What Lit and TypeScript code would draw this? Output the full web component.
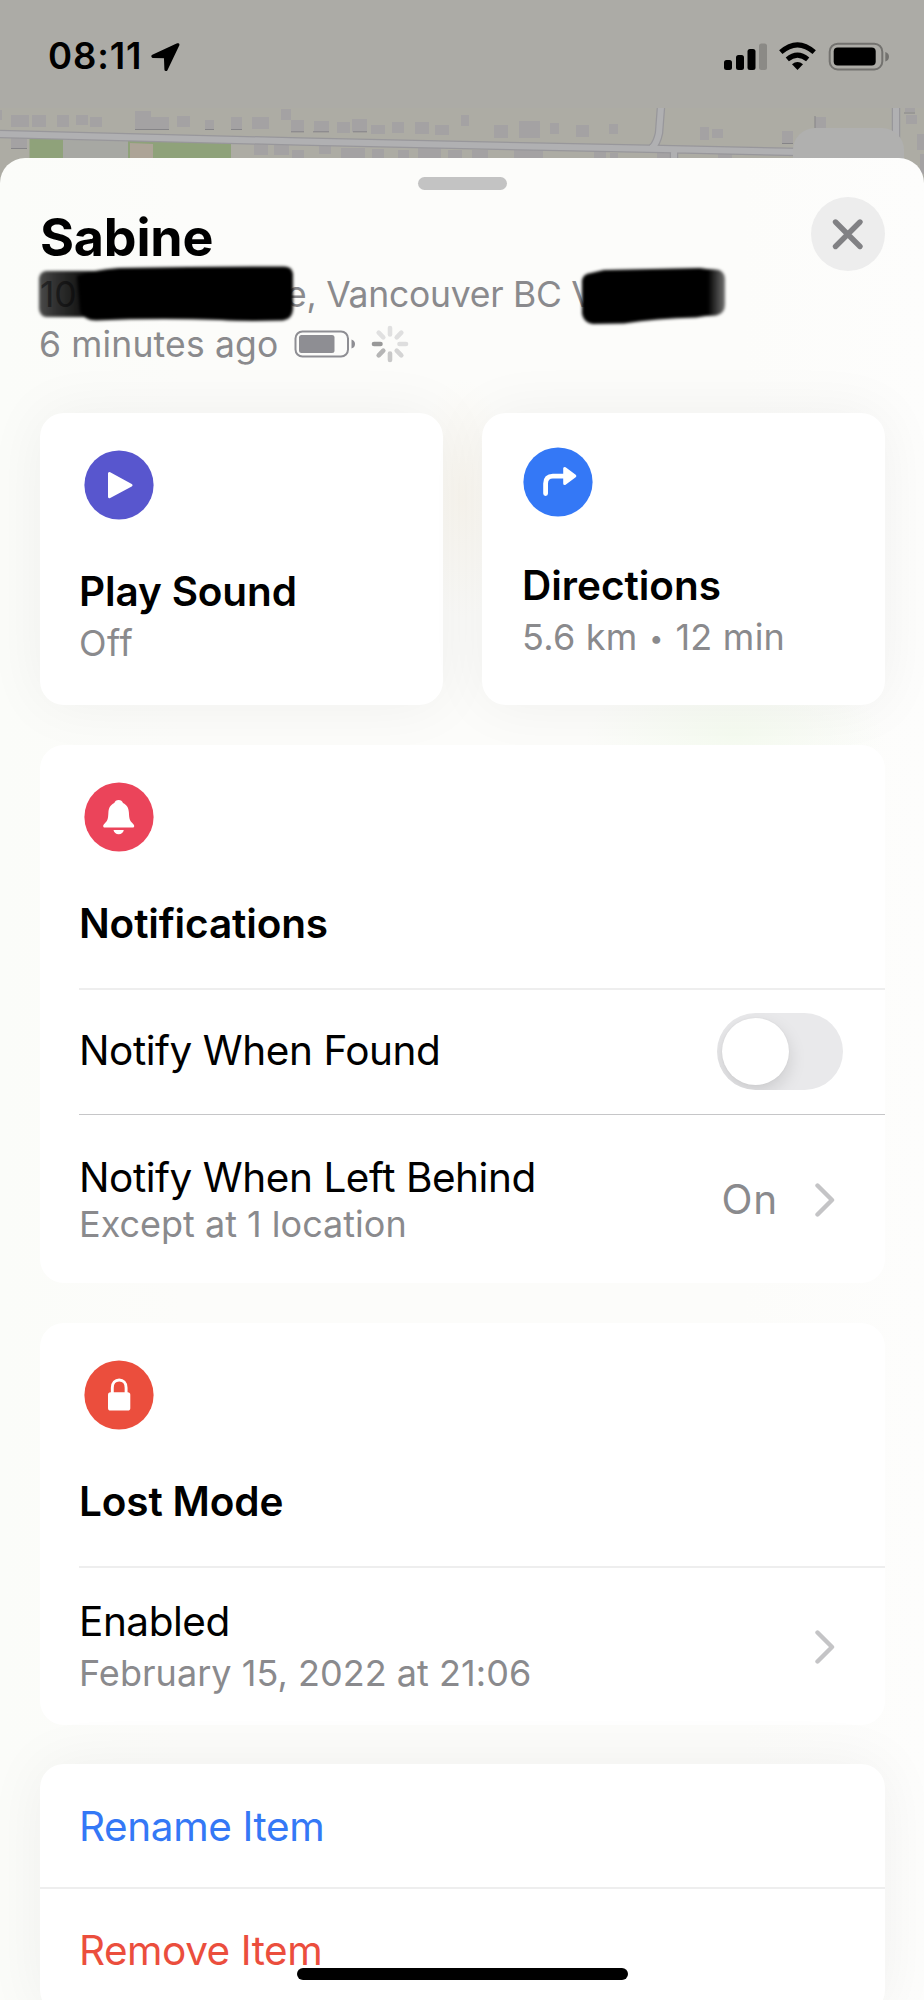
import { LitElement, html, css, svg } from "lit";
import { customElement, state } from "lit/decorators.js";

// x, y, width, height of the building footprints on the map strip
const buildings: number[][] = [
  [0, 110, 2, 10], [11, 115, 18, 12], [32, 115, 14, 12], [57, 115, 12, 12], [76, 115, 12, 10], [90, 117, 12, 10],
  [135, 111, 16, 18], [150, 117, 19, 12], [177, 116, 13, 11], [205, 120, 9, 10], [231, 117, 11, 13], [252, 117, 17, 12],
  [281, 109, 10, 11], [291, 120, 13, 12], [314, 121, 15, 11], [337, 122, 13, 11], [352, 119, 15, 13], [371, 125, 14, 9],
  [392, 122, 12, 11], [415, 122, 14, 12], [435, 125, 14, 10], [461, 115, 8, 11], [494, 125, 14, 13], [519, 121, 21, 17],
  [550, 123, 9, 11], [576, 125, 13, 12], [609, 124, 9, 10], [700, 127, 9, 13], [712, 129, 11, 9], [782, 131, 11, 12],
  [815, 117, 11, 11], [906, 115, 11, 9], [917, 134, 7, 16], [905, 107, 10, 5],
  [11, 138, 16, 10], [254, 144, 14, 11], [274, 145, 15, 10], [292, 150, 12, 8], [319, 145, 12, 9], [341, 148, 24, 10],
  [372, 149, 12, 9], [398, 150, 11, 8], [418, 147, 23, 11], [448, 150, 14, 8], [472, 150, 16, 8], [514, 149, 29, 9],
  [594, 151, 12, 7], [610, 153, 8, 5], [657, 152, 14, 6], [718, 154, 14, 4], [920, 154, 4, 20],
];

const disc = (color: string, glyph: unknown) => html`
  <svg class="disc" viewBox="0 0 70 70"><circle cx="35" cy="35" r="34.6" fill=${color} />${glyph}</svg>`;

const playGlyph = svg`<path d="M25.5 23.5v23.3L47 35.2z" fill="#fff" stroke="#fff" stroke-width="3" stroke-linejoin="round"/>`;
const turnGlyph = svg`<path d="M22.6 46.5V36.5q0-7.3 7.3-7.3H41" fill="none" stroke="#fff" stroke-width="4.8" stroke-linecap="round"/>
  <path d="M41.7 21.5v15L51.8 29z" fill="#fff" stroke="#fff" stroke-width="3" stroke-linejoin="round"/>`;
const bellGlyph = svg`<path d="M34.6 18c2.3 0 3.7 1.3 4.4 3 4 1.8 5.7 5.2 5.9 9.5.3 6.8 1 8.3 3.6 10.7 1.5 1.4 1.7 2 1.7 2.9 0 1-.6 1.5-1.7 1.5H20.9c-1.1 0-1.7-.5-1.7-1.5 0-.9.2-1.5 1.7-2.9 2.6-2.4 3.2-3.9 3.5-10.7.2-4.300 1.900-7.700 5.900-9.500.7-1.700 2-3 4.300-3zM29.500 48h10.300c-.4 2.600-2.400 4.200-5.100 4.200s-4.800-1.600-5.200-4.200z" fill="#fff"/>`;
const lockGlyph = svg`<rect x="24" y="32.300" width="22.300" height="18.300" rx="2.600" fill="#fff"/>
  <path d="M28.300 34v-6.300c0-4.800 2.900-7.700 6.900-7.700s6.900 2.900 6.900 7.700V34" fill="none" stroke="#fff" stroke-width="2.900"/>`;

const chevron = html`<svg class="chevron" width="20" height="34" viewBox="0 0 20 34"><path d="M2.500 2.500L17 17 2.500 31.500" fill="none" stroke="#c4c4c6" stroke-width="4.400" stroke-linecap="round" stroke-linejoin="round"/></svg>`;

@customElement("app-root")
export class AppRoot extends LitElement {
  @state() notifyFound = false;

  static styles = css`
    :host { display: block; width: 924px; height: 2000px; position: relative; overflow: hidden; background: #acaba6;
      font-family: Inter, "Liberation Sans", sans-serif; color: #000; }
    svg { display: block; flex: none; }
    .map { position: absolute; left: 0; top: 0; }
    .status { position: relative; height: 158px; box-sizing: border-box; padding: 34px 34px 0 48px; display: flex; align-items: flex-start; justify-content: space-between; }
    .clock { display: flex; align-items: flex-start; gap: 9px; }
    .time { font-size: 36.5px; line-height: 45px; font-weight: 600; letter-spacing: 0.87px; }
    .arrow { margin-top: 9px; }
    .signals { margin-top: 8px; }
    .sheet { position: relative; height: 1842px; box-sizing: border-box; padding: 0 39px 0 40px; border-radius: 25px 25px 0 0; display: flex; flex-direction: column;
      background: radial-gradient(ellipse 150px 60px at 735px 577px, #f5fbf0, transparent), radial-gradient(ellipse 50px 120px at 462px 340px, #faf7f0, transparent), linear-gradient(90deg, #fbfcf9, #fcfcfa 20%, #fcfcfa 80%, #fdfdfc); }
    .grabber { width: 89px; height: 13px; border-radius: 7px; background: #c3c3c3; margin: 19px auto 0; flex: none; }
    .head { display: flex; justify-content: space-between; height: 223px; flex: none; }
    .ident { padding-top: 18px; }
    .name { font-size: 52px; line-height: 60px; font-weight: 700; letter-spacing: -0.2px; }
    .line { position: relative; display: flex; align-items: center; font-size: 35.5px; line-height: 50px; color: #8a8a8d; white-space: pre; }
    .addr { margin-top: 2px; letter-spacing: -0.26px; }
    .num { width: 246px; }
    .redact { position: absolute; left: -6px; top: -10px; }
    .ago { letter-spacing: .16px; margin-left: -1px; }
    .batt { margin: 0 0 2px 16px; }
    .spin { margin: 0 0 2px 15px; }
    .close { margin-top: 7px; }
    .pair { display: grid; grid-template-columns: 1fr 1fr; gap: 39px; margin-bottom: 40px; flex: none; }
    .card { background: #fff; border-radius: 24px; flex: none; box-sizing: border-box; padding-left: 39px; }
    .shade { box-shadow: 0 0 60px rgba(0, 0, 0, .055); }
    .pair .card { height: 292px; }
    .disc { width: 70px; height: 70px; margin-left: 5px; }
    .title { font-size: 40.5px; line-height: 50px; font-weight: 600; letter-spacing: -.14px; white-space: pre; }
    .sub { font-size: 36px; line-height: 46px; color: #8a8a8d; white-space: pre; }
    .label { font-size: 40.5px; line-height: 50px; letter-spacing: -.45px; white-space: pre; }
    .play { padding-top: 37px; }
    .play .title { margin-top: 47px; }
    .play .sub { margin-top: 3px; letter-spacing: .5px; }
    .dir { padding-top: 34px; }
    .dir .disc { margin-left: 2px; }
    .dir .title { margin: 44px 0 0 1px; letter-spacing: -.02px; }
    .dir .sub { margin: 3px 0 0 1px; letter-spacing: .25px; }
    .dot { display: inline-block; width: 17px; text-align: center; font-size: 25px; line-height: 0; vertical-align: 3px; }
    .notif { height: 538px; margin-bottom: 40px; padding-top: 37px; }
    .lost { height: 402px; margin-bottom: 39px; padding-top: 37px; }
    .notif .title { margin-top: 47px; height: 89px; }
    .lost .title { margin-top: 47px; height: 89px; }
    .row { display: flex; align-items: center; justify-content: space-between; border-top: 2px solid #eee; box-sizing: border-box; padding-right: 42px; }
    .found { height: 126px; padding-bottom: 2px; }
    .left { height: 169px; border-top: 1px solid #c6c6c8; padding-top: 2px; }
    .left .sub { margin-top: -2px; }
    .enabled { height: 159px; }
    .enabled .label { letter-spacing: -.45px; }
    .enabled .sub { margin-top: 3px; letter-spacing: .04px; }
    .value { font-size: 40.5px; line-height: 50px; letter-spacing: .8px; color: #8a8a8d; margin-left: -1px; }
    .end { display: flex; align-items: center; gap: 37px; padding-right: 8px; }
    .toggle { width: 126px; height: 77px; border-radius: 39px; background: #e9e9eb; box-sizing: border-box; padding: 5px; overflow: hidden; border: 0; }
    .knob { width: 67px; height: 67px; border-radius: 50%; background: #fff; box-shadow: 0 7px 18px rgba(0,0,0,.13), 0 0 2px rgba(0,0,0,.06); }
    .actions { height: 250px; padding: 0; }
    .action { height: 123px; box-sizing: border-box; padding: 38px 0 0 39px; font-size: 40.5px; line-height: 50px; letter-spacing: -.4px; color: #3478f6; }
    .danger { color: #eb4e3d; border-top: 2px solid #eee; height: 127px; padding-top: 37px; letter-spacing: -.48px; }
    .home { position: absolute; left: 297px; top: 1968px; width: 331px; height: 12px; border-radius: 6px; background: #000; }
  `;

  render() {
    return html`
      <svg class="map" width="924" height="200" viewBox="0 0 924 200">
        <rect y="107" width="924" height="93" fill="#adaca4"/>
        <path d="M63 138L128 141V160H63z" fill="#a7a8a3"/>
        <path d="M29.5 137.5L63 139V160H29.5zM128 140L231 143.5V160H128z" fill="#8fa27a"/>
        <path d="M130 143L153 144V160H130z" fill="#ada497"/>
        <g fill="#a4a2a3">${buildings.map(([x, y, w, h]) => svg`<rect x=${x} y=${y} width=${w} height=${h}/>`)}</g>
        <path d="M135 129.5h34M205 129.5h9M231 129.5h11M291 131.8h13M313 131.8h16M353 131.8h14M11 148.5h16M782 143.5h11M815 116v12M904 113h11" fill="none" stroke="#858487" stroke-width="1"/>
        <g fill="none" stroke-linejoin="round">
          <path d="M0 134L300 141.5 462 145 662 149 800 152M661 107L659 133Q657 143 652 148M674 147V160M896 107V140" stroke="#98979b" stroke-width="8.5"/>
          <path d="M0 134L300 141.5 462 145 662 149 800 152M661 107L659 133Q657 143 652 148M674 147V160M896 107V140" stroke="#b0b0b2" stroke-width="6"/>
        </g>
        <rect x="793" y="128" width="111" height="60" rx="22" fill="#b0b0af"/>
        <rect width="924" height="108" fill="#acaba6"/>
      </svg>

      <header class="status">
        <div class="clock">
          <span class="time">08:11</span>
          <svg class="arrow" width="29" height="29" viewBox="0 0 29 29"><path d="M26.800 1.800L2 13.300l12.500.4.500 12.800z" stroke="#000" stroke-width="3.200" stroke-linejoin="round"/></svg>
        </div>
        <svg class="signals" width="166" height="30" viewBox="724 42 166 30">
          <rect x="724" y="60" width="8" height="10" rx="2.500"/><rect x="736" y="55" width="8" height="15" rx="2.500"/>
          <rect x="747.500" y="49" width="8" height="21" rx="2.500"/><rect x="759" y="43.500" width="8" height="26.500" rx="2.500" fill="#8b8a86"/>
          <g fill="none" stroke="#000" stroke-width="5"><path d="M780.800 52.200Q797.500 37.500 814.200 52.200"/><path d="M787.300 59.300Q797.500 50.800 807.700 59.300"/></g>
          <path d="M797.500 70l-5.500-5.700q5.500-4.400 11 0z"/>
          <rect x="829.700" y="43.700" width="52.600" height="25.800" rx="8" fill="none" stroke="#73726f" stroke-width="2"/>
          <rect x="833.700" y="47.500" width="42" height="18" rx="4"/>
          <path d="M885.300 52q3.700 1.200 3.700 4.700t-3.700 4.700z" fill="#73726f"/>
        </svg>
      </header>

      <main class="sheet">
        <div class="grabber"></div>
        <div class="head">
          <div class="ident">
            <div class="name">Sabine</div>
            <div class="line addr">
              <span class="num">10</span><span>e, Vancouver BC V</span>
              <svg class="redact" width="710" height="70" viewBox="34 260 710 70">
                <defs><filter id="soft" x="-10%" y="-10%" width="120%" height="120%"><feGaussianBlur stdDeviation="1.400"/></filter>
                <linearGradient id="fade"><stop offset="0" stop-color="#000" stop-opacity=".7"/><stop offset=".25" stop-color="#000" stop-opacity=".8"/><stop offset="1"/></linearGradient>
                <linearGradient id="tail"><stop offset="0"/><stop offset=".88"/><stop offset="1" stop-opacity=".55"/></linearGradient></defs>
                <g filter="url(#soft)">
                  <path d="M39 278q1-6 7-7H100V317H46q-6-1-7-8z" fill="url(#fade)"/>
                  <path d="M77 276q15-6 42-8 90-2 165-1.500 8 0 9 7v36q-1 10-10 11-40 1-62-.500-65-2-125 .500-12 0-16-9z"/>
                  <path d="M582 280q1-6 9-7l13-3 96-2q6 1 15 1.500 9 0 10 9v26q0 9-9 11-10 0-20 2-40 1-72 6l-31 .5q-9-1-11-10z" fill="url(#tail)"/>
                </g>
              </svg>
            </div>
            <div class="line"><span class="ago">6 minutes ago</span>
              <svg class="batt" width="62" height="28" viewBox="0 0 62 28"><rect x="1.500" y="1.500" width="52.500" height="25" rx="7" fill="none" stroke="#8e8e93" stroke-width="2"/><rect x="5" y="5" width="35.500" height="18" rx="2.500" fill="#8e8e93"/><path d="M57.500 9.500q3.500 1 3.500 4.500t-3.500 4.500z" fill="#8e8e93"/></svg>
              <svg class="spin" width="38" height="38" viewBox="-19 -19 38 38">
                ${["#e0e0e0", "#dfdfdf", "#dedede", "#d4d4d4", "#c8c8c8", "#b5b5b5", "#989898", "#e0e0e0"].map((c, i) => svg`<path d="M0 -9.500V-16" stroke=${c} stroke-width="4.600" stroke-linecap="round" transform=${`rotate(${i * 45})`}/>`)}
              </svg>
            </div>
          </div>
          <svg class="close" width="74" height="74" viewBox="0 0 74 74"><circle cx="37" cy="37" r="37" fill="#ededed"/><path d="M24.500 25L49 49.500M49 25L24.500 49.500" stroke="#818184" stroke-width="5.400" stroke-linecap="round"/></svg>
        </div>

        <section class="pair">
          <div class="card shade play">${disc("#5856ce", playGlyph)}<div class="title">Play Sound</div><div class="sub">Off</div></div>
          <div class="card shade dir">${disc("#3478f6", turnGlyph)}<div class="title">Directions</div><div class="sub">5.6 km <span class="dot">•</span> 12 min</div></div>
        </section>

        <section class="card notif">
          ${disc("#eb445a", bellGlyph)}
          <div class="title">Notifications</div>
          <div class="row found"><span class="label">Notify When Found</span>
            <button class="toggle" aria-pressed=${this.notifyFound} @click=${() => (this.notifyFound = !this.notifyFound)}><div class="knob"></div></button></div>
          <div class="row left"><div><div class="label">Notify When Left Behind</div><div class="sub">Except at 1 location</div></div>
            <div class="end"><span class="value">On</span>${chevron}</div></div>
        </section>

        <section class="card lost">
          ${disc("#eb4e3d", lockGlyph)}
          <div class="title">Lost Mode</div>
          <div class="row enabled"><div><div class="label">Enabled</div><div class="sub">February 15, 2022 at 21:06</div></div><div class="end">${chevron}</div></div>
        </section>

        <section class="card shade actions">
          <div class="action">Rename Item</div>
          <div class="action danger">Remove Item</div>
        </section>
      </main>
      <div class="home"></div>
    `;
  }
}
